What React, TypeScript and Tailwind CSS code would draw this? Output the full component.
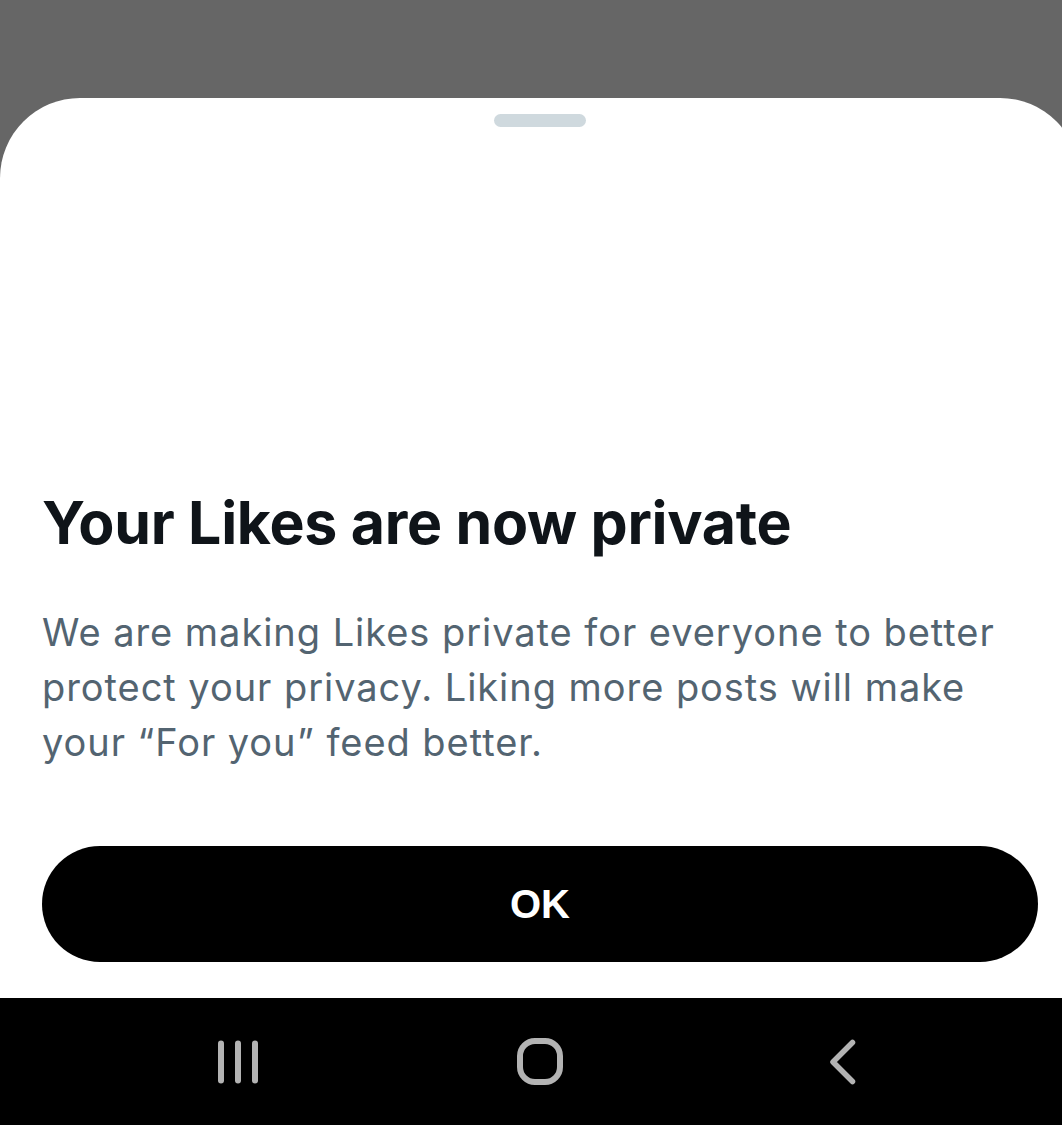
export default function App() {
  return (
    <div className="flex h-[1125px] w-[1062px] flex-col overflow-hidden bg-[#666666]">
      {/* Dimmed backdrop */}
      <div className="h-[98px] shrink-0" />

      {/* Bottom sheet (a bit wider than the viewport, right corner is clipped) */}
      <div className="flex h-[900px] w-[1080px] shrink-0 flex-col rounded-t-[80px] bg-white px-[42px] pb-[36px]">
        <div className="flex justify-center pt-[16px]">
          <div className="h-[13px] w-[92px] rounded-full bg-[#cfd9de]" />
        </div>

        <div className="flex flex-1 flex-col justify-end">
          <h1
            className="text-[59px] font-bold leading-[72px] tracking-[-0.3px] text-[#0f1419]"
            style={{ fontFamily: 'Inter, "Noto Sans", sans-serif' }}
          >
            Your Likes are now private
          </h1>
          <p
            className="mt-[46px] text-[38px] leading-[55px] tracking-[0.95px] text-[#536471]"
            style={{ fontFamily: 'Inter, "Noto Sans", sans-serif' }}
          >
            We are making Likes private for everyone to better protect your privacy. Liking more posts will make your “For you” feed better.
          </p>
          <button
            className="mt-[76px] flex h-[116px] w-full items-center justify-center rounded-full bg-black text-[40px] font-bold text-white"
            style={{ fontFamily: '"Liberation Sans", Arial, sans-serif' }}
          >
            OK
          </button>
        </div>
      </div>

      {/* Android navigation bar */}
      <div className="flex h-[127px] w-[1080px] shrink-0 items-center justify-center gap-[242px] bg-black">
        <svg width="60" height="60" viewBox="0 0 60 60">
          <rect x="10" y="8.5" width="6" height="43" rx="3" fill="#b3b3b3" />
          <rect x="27" y="8.5" width="6" height="43" rx="3" fill="#b3b3b3" />
          <rect x="44" y="8.5" width="6" height="43" rx="3" fill="#b3b3b3" />
        </svg>
        <svg width="60" height="60" viewBox="0 0 60 60">
          <rect x="10" y="9" width="40" height="41" rx="15" fill="none" stroke="#b3b3b3" strokeWidth="6" />
        </svg>
        <svg width="60" height="60" viewBox="0 0 60 60">
          <path d="M40.5 10.5 L21 30 L40.5 49.5" fill="none" stroke="#b3b3b3" strokeWidth="5.5" strokeLinecap="round" strokeLinejoin="round" />
        </svg>
      </div>
    </div>
  )
}
